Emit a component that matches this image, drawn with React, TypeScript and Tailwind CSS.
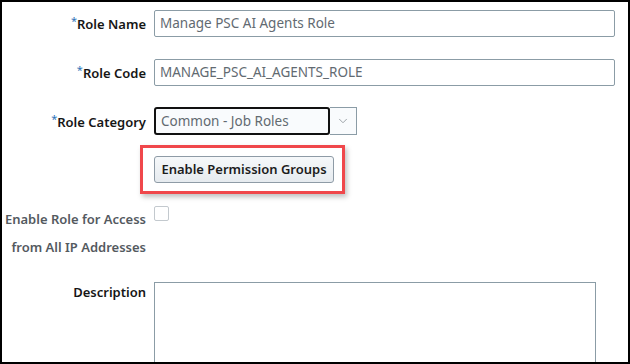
import { ChevronDown } from 'lucide-react';

const font = { fontFamily: '"Noto Sans", "Open Sans", Arial, sans-serif' };

const Label = ({ text, required }: { text: string; required?: boolean }) => (
  <div className="w-[144px] shrink-0 text-right text-[13px] font-semibold text-[#161616] pt-[3px]">
    {required && <span className="text-[#2f73b8] text-[11px] align-top relative -top-[2px] font-normal">*</span>}
    {text}
  </div>
);

export default function App() {
  return (
    <div className="w-[630px] h-[364px] overflow-hidden bg-white border-2 border-black" style={font}>
      <div className="flex flex-col pt-[8px]">
        <div className="flex items-center gap-[8px]">
          <Label text="Role Name" required />
          <div className="w-[461px] h-[27px] border border-[#8b9ca6] rounded-[2px] flex items-center px-[5px] text-[13.5px] text-[#626a71]">
            Manage PSC AI Agents Role
          </div>
        </div>

        <div className="flex items-center gap-[8px] mt-[22px]">
          <Label text="Role Code" required />
          <div className="w-[461px] h-[27px] border border-[#8b9ca6] rounded-[2px] flex items-center px-[5px] text-[13.5px] text-[#626a71]">
            MANAGE_PSC_AI_AGENTS_ROLE
          </div>
        </div>

        <div className="flex items-center gap-[8px] mt-[21px]">
          <Label text="Role Category" required />
          <div className="flex">
            <div className="w-[176px] h-[28px] border-2 border-[#111] rounded-[3px] bg-[#f9fbfd] flex items-center px-[5px] text-[13.5px] text-[#626a71]">
              Common - Job Roles
            </div>
            <div className="w-[27px] h-[28px] border border-l-0 border-[#8b9ca6] bg-[#f9fbfd] flex items-center justify-center">
              <ChevronDown className="w-[14px] h-[14px] text-[#8f969c]" strokeWidth={1.5} />
            </div>
          </div>
        </div>

        <div className="flex gap-[8px] mt-[10px]">
          <div className="w-[144px] shrink-0" />
          <div className="-ml-[14px] border-[3px] border-[#f0474b] pl-[11px] pr-[8px] py-[8px] shadow-[2px_3px_5px_rgba(0,0,0,0.25)]">
            <div className="w-[180px] h-[27px] rounded-[3px] border border-[#8e9ba6] bg-gradient-to-b from-[#f6f8fa] to-[#e6ebef] flex items-center justify-center text-[13px] font-semibold text-[#1c1c1c]">
              Enable Permission Groups
            </div>
          </div>
        </div>

        <div className="flex gap-[8px] mt-[11px]">
          <div className="w-[144px] shrink-0 text-right text-[13px] font-semibold text-[#545a5f] leading-[28px]">
            Enable Role for Access
            <br />
            from All IP Addresses
          </div>
          <div className="w-[15px] h-[15px] mt-[1px] border border-[#c3c9ce] rounded-[2px] bg-white" />
        </div>

        <div className="flex gap-[8px] mt-[21px]">
          <div className="w-[144px] shrink-0 text-right text-[13px] font-semibold text-[#161616] leading-[20px]">
            Description
          </div>
          <div className="w-[442px] h-[100px] border border-[#8b9ca6] bg-white" />
        </div>
      </div>
    </div>
  );
}
